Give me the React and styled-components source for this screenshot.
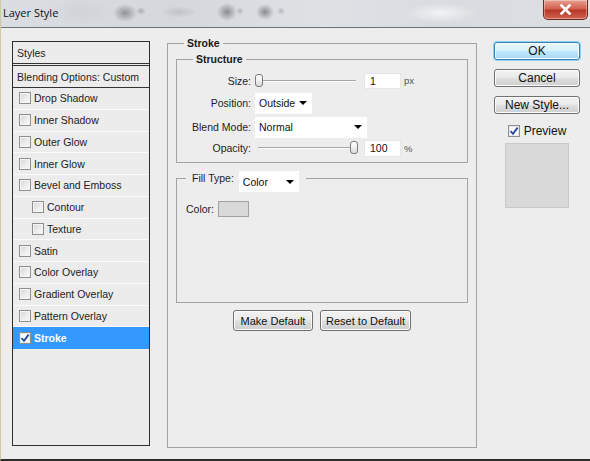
import React from 'react';
import styled, { createGlobalStyle } from 'styled-components';

const GlobalStyle = createGlobalStyle`
  html, body {
    margin: 0;
    padding: 0;
    background: #ededed;
  }
  body {
    font-family: "Liberation Sans", Arial, sans-serif;
    font-size: 10.5px;
    color: #1e1e1e;
  }
`;

const Window = styled.div`
  width: 590px;
  height: 461px;
  box-sizing: border-box;
  display: flex;
  flex-direction: column;
  background: #ededed;
  border-left: 1px solid #cfc9a6;
  border-bottom: 2px solid #2d2c28;
  overflow: hidden;
`;

const TitleBar = styled.div`
  height: 28px;
  flex: none;
  box-sizing: border-box;
  display: flex;
  justify-content: space-between;
  align-items: flex-start;
  border-bottom: 1px solid #6e7073;
  background:
    radial-gradient(ellipse 12px 9px at 124px 13px, rgba(120, 124, 128, 0.75), transparent),
    radial-gradient(ellipse 5px 4px at 140px 11px, rgba(140, 144, 148, 0.6), transparent),
    radial-gradient(ellipse 18px 6px at 178px 12px, rgba(170, 174, 178, 0.5), transparent),
    radial-gradient(ellipse 10px 9px at 226px 12px, rgba(110, 114, 118, 0.75), transparent),
    radial-gradient(ellipse 4px 4px at 239px 11px, rgba(140, 144, 148, 0.5), transparent),
    radial-gradient(ellipse 9px 8px at 264px 12px, rgba(110, 114, 118, 0.75), transparent),
    radial-gradient(ellipse 4px 4px at 280px 11px, rgba(140, 144, 148, 0.5), transparent),
    radial-gradient(ellipse 36px 10px at 440px 13px, rgba(246, 247, 248, 0.85), transparent),
    radial-gradient(ellipse 30px 14px at 80px 12px, rgba(200, 204, 208, 0.5), transparent),
    linear-gradient(90deg, #dadde1 0%, #d4d8dc 30%, #dfe2e5 55%, #d8dbdf 75%, #dde0e3 100%);
`;

const Title = styled.div`
  font-family: "Open Sans", "Liberation Sans", sans-serif;
  font-size: 11px;
  color: #111;
  padding: 5px 0 0 2px;
`;

const CloseButton = styled.div`
  width: 45px;
  height: 20px;
  margin-right: 2px;
  box-sizing: border-box;
  border: 1px solid #6b2a22;
  border-top: none;
  border-radius: 0 0 5px 5px;
  background: linear-gradient(180deg, #e8a093 0%, #d2604f 45%, #b7382a 55%, #d0654f 100%);
  display: flex;
  align-items: center;
  justify-content: center;
  box-shadow: inset 0 0 0 1px rgba(255, 255, 255, 0.35);
`;

const Body = styled.div`
  flex: 1;
  display: flex;
  align-items: flex-start;
  padding: 13px 0 0 11px;
`;

const StyleList = styled.div`
  width: 138px;
  height: 405px;
  flex: none;
  box-sizing: border-box;
  border: 1px solid #2e2e2e;
  background: #ececec;
  display: flex;
  flex-direction: column;
`;

const ListHeader = styled.div`
  height: ${(p) => (p.$double ? 24 : 22)}px;
  flex: none;
  box-sizing: border-box;
  display: flex;
  align-items: center;
  padding-left: 4px;
  border-bottom: ${(p) => (p.$double ? '3px double #333' : '1px solid #333')};
`;

const ListRow = styled.div`
  height: 21.75px;
  flex: none;
  box-sizing: border-box;
  display: flex;
  align-items: center;
  gap: 3px;
  padding-left: ${(p) => (p.$indent ? 19 : 6)}px;
  border-bottom: 1px solid ${(p) => (p.$selected ? '#3399ff' : '#fafafa')};
  background: ${(p) => (p.$selected ? '#3399ff' : 'transparent')};
  color: ${(p) => (p.$selected ? '#fff' : '#222')};
  font-weight: ${(p) => (p.$selected ? 'bold' : 'normal')};
`;

const Box = styled.span`
  width: 12px;
  height: 12px;
  flex: none;
  box-sizing: border-box;
  border: 1px solid #8e8f8f;
  background: ${(p) =>
    p.$checked ? '#fff' : 'linear-gradient(135deg, #d6d6d6 0%, #eeeeee 60%, #f8f8f8 100%)'};
  box-shadow: inset 0 0 0 1px ${(p) => (p.$checked ? '#e8e8e8' : '#f4f4f4')};
  display: flex;
  align-items: center;
  justify-content: center;
`;

const MiddleColumn = styled.div`
  width: 310px;
  flex: none;
  margin-left: 17px;
  margin-top: -4px;
  display: flex;
  flex-direction: column;
`;

const Group = styled.fieldset`
  margin: 0;
  min-width: 0;
  box-sizing: border-box;
  border: 1px solid #a3a3a3;
  padding: ${(p) => p.$pad};
  height: ${(p) => (p.$height ? `${p.$height}px` : 'auto')};
`;

const Legend = styled.legend`
  font-weight: bold;
  color: #1a1a1a;
  line-height: 13px;
  padding: 0 3px;
  margin-left: ${(p) => p.$offset}px;
`;

const FillLegend = styled.legend`
  height: 14px;
  padding: 0 7px 0 6px;
  display: flex;
  align-items: flex-start;
  gap: 5px;
  line-height: 14px;
`;

const FieldGrid = styled.div`
  display: grid;
  grid-template-columns: 74px 1fr;
  grid-template-rows: 21px 24px 24px 18px;
  column-gap: 4px;
  align-items: center;
`;

const Label = styled.div`
  text-align: right;
  white-space: nowrap;
`;

const Control = styled.div`
  display: flex;
  align-items: center;
`;

const SliderWrap = styled.div`
  position: relative;
  width: ${(p) => p.$width}px;
  height: 14px;
  margin-left: ${(p) => p.$offset}px;
  margin-right: ${(p) => 109 - p.$width - p.$offset}px;
  flex: none;
`;

const Track = styled.div`
  position: absolute;
  left: 0;
  right: 0;
  top: 6px;
  height: 1px;
  background: #a6a6a6;
  border-bottom: 1px solid #fbfbfb;
`;

const Thumb = styled.div`
  position: absolute;
  top: 0;
  width: 8px;
  height: 13px;
  box-sizing: border-box;
  border: 1px solid #7b7b7b;
  border-radius: 3px;
  background: linear-gradient(180deg, #ffffff 0%, #f0f0f0 50%, #d8d8d8 100%);
`;

const NumberBox = styled.div`
  width: 37px;
  height: ${(p) => p.$h}px;
  box-sizing: border-box;
  background: #fff;
  border: 1px solid #e6e6e6;
  padding-left: 5px;
  display: flex;
  align-items: center;
  color: #111;
`;

const Unit = styled.span`
  margin-left: 3px;
  color: #555;
  font-size: 9.5px;
`;

const Select = styled.div`
  width: ${(p) => p.$width}px;
  height: 21px;
  flex: none;
  box-sizing: border-box;
  background: #fff;
  padding: 0 5px 0 4px;
  display: flex;
  align-items: center;
  justify-content: space-between;
  color: #111;
  font-size: 10.5px;
`;

const Arrow = styled.span`
  width: 0;
  height: 0;
  border-left: 4px solid transparent;
  border-right: 4px solid transparent;
  border-top: 4px solid #000;
`;

const ColorRow = styled.div`
  display: flex;
  align-items: center;
  gap: 4px;
`;

const Swatch = styled.div`
  width: ${(p) => p.$w}px;
  height: ${(p) => p.$h}px;
  box-sizing: border-box;
  background: #d9d9d9;
  border: 1px solid ${(p) => p.$border};
`;

const PreviewSwatch = styled(Swatch)`
  margin-top: -4px;
`;

const ButtonRow = styled.div`
  display: flex;
  justify-content: center;
  gap: 7px;
  margin-top: 7px;
`;

const PushButton = styled.div`
  width: ${(p) => p.$width}px;
  height: ${(p) => p.$height}px;
  box-sizing: border-box;
  border: 1px solid ${(p) => (p.$default ? '#3c7fb1' : '#707070')};
  border-radius: 3px;
  background: ${(p) =>
    p.$default
      ? 'linear-gradient(180deg, #eaf6fd 0%, #d9f0fc 45%, #bee6fd 55%, #a7d9f5 100%)'
      : 'linear-gradient(180deg, #f2f2f2 0%, #ebebeb 45%, #dddddd 55%, #cfcfcf 100%)'};
  box-shadow: ${(p) =>
    p.$default ? '0 0 0 1px #8ed1f5, inset 0 0 0 1px #f4fbff' : 'inset 0 0 0 1px #fcfcfc'};
  display: flex;
  align-items: center;
  justify-content: center;
  color: #111;
  font-size: ${(p) => p.$font}px;
`;

const RightColumn = styled.div`
  width: 86px;
  flex: none;
  margin-left: 17px;
  margin-top: 1px;
  display: flex;
  flex-direction: column;
  align-items: center;
  gap: 9px;
`;

const PreviewRow = styled.div`
  display: flex;
  align-items: center;
  gap: 4px;
  margin-top: 1px;
  font-size: 12px;
  color: #111;
`;

const Check = () => (
  <svg width="10" height="10" viewBox="0 0 10 10">
    <path d="M1.5 5.2 L4 7.8 L8.6 1.6" fill="none" stroke="#2b4a9a" strokeWidth="1.9" />
  </svg>
);

const CheckBox = ({ checked }) => <Box $checked={checked}>{checked && <Check />}</Box>;

const effects = [
  { name: 'Drop Shadow' },
  { name: 'Inner Shadow' },
  { name: 'Outer Glow' },
  { name: 'Inner Glow' },
  { name: 'Bevel and Emboss' },
  { name: 'Contour', indent: true },
  { name: 'Texture', indent: true },
  { name: 'Satin' },
  { name: 'Color Overlay' },
  { name: 'Gradient Overlay' },
  { name: 'Pattern Overlay' },
  { name: 'Stroke', checked: true, selected: true },
];

const Slider = ({ width, offset, value }) => (
  <SliderWrap $width={width} $offset={offset}>
    <Track />
    <Thumb style={{ left: `${Math.round((width - 8) * value)}px` }} />
  </SliderWrap>
);

export default function App() {
  return (
    <>
      <GlobalStyle />
      <Window>
        <TitleBar>
          <Title>Layer Style</Title>
          <CloseButton>
            <svg width="13" height="11" viewBox="0 0 13 11">
              <path d="M2.5 1.5 L10.5 9.5 M10.5 1.5 L2.5 9.5" stroke="#fff" strokeWidth="2.6" strokeLinecap="square" />
            </svg>
          </CloseButton>
        </TitleBar>
        <Body>
          <StyleList>
            <ListHeader $double>Styles</ListHeader>
            <ListHeader>Blending Options: Custom</ListHeader>
            {effects.map((e) => (
              <ListRow key={e.name} $indent={e.indent} $selected={e.selected}>
                <CheckBox checked={e.checked} />
                {e.name}
              </ListRow>
            ))}
          </StyleList>

          <MiddleColumn>
            <Group $pad="3px 8px 0 8px" $height={411}>
              <Legend $offset={8}>Stroke</Legend>
              <Group $pad="4px 0 5px 0">
                <Legend $offset={16}>Structure</Legend>
                <FieldGrid>
                  <Label>Size:</Label>
                  <Control>
                    <Slider width={101} offset={0} value={0} />
                    <NumberBox $h={16}>1</NumberBox>
                    <Unit>px</Unit>
                  </Control>
                  <Label>Position:</Label>
                  <Control>
                    <Select $width={57}>
                      Outside
                      <Arrow />
                    </Select>
                  </Control>
                  <Label>Blend Mode:</Label>
                  <Control>
                    <Select $width={112}>
                      Normal
                      <Arrow />
                    </Select>
                  </Control>
                  <Label>Opacity:</Label>
                  <Control>
                    <Slider width={100} offset={3} value={1} />
                    <NumberBox $h={17}>100</NumberBox>
                    <Unit>%</Unit>
                  </Control>
                </FieldGrid>
              </Group>

              <Group $pad="16px 0 0 9px" $height={132} style={{ marginTop: 8 }}>
                <FillLegend>
                  Fill Type:
                  <Select $width={60}>
                    Color
                    <Arrow />
                  </Select>
                </FillLegend>
                <ColorRow>
                  Color:
                  <Swatch $w={31} $h={16} $border="#a2a2a2" />
                </ColorRow>
              </Group>

              <ButtonRow>
                <PushButton $width={80} $height={21} $font={11}>Make Default</PushButton>
                <PushButton $width={91} $height={21} $font={11}>Reset to Default</PushButton>
              </ButtonRow>
            </Group>
          </MiddleColumn>

          <RightColumn>
            <PushButton $default $width={86} $height={18} $font={12}>OK</PushButton>
            <PushButton $width={86} $height={18} $font={12}>Cancel</PushButton>
            <PushButton $width={86} $height={18} $font={12}>New Style...</PushButton>
            <PreviewRow>
              <CheckBox checked />
              Preview
            </PreviewRow>
            <PreviewSwatch $w={64} $h={65} $border="#c9c9c9" />
          </RightColumn>
        </Body>
      </Window>
    </>
  );
}
